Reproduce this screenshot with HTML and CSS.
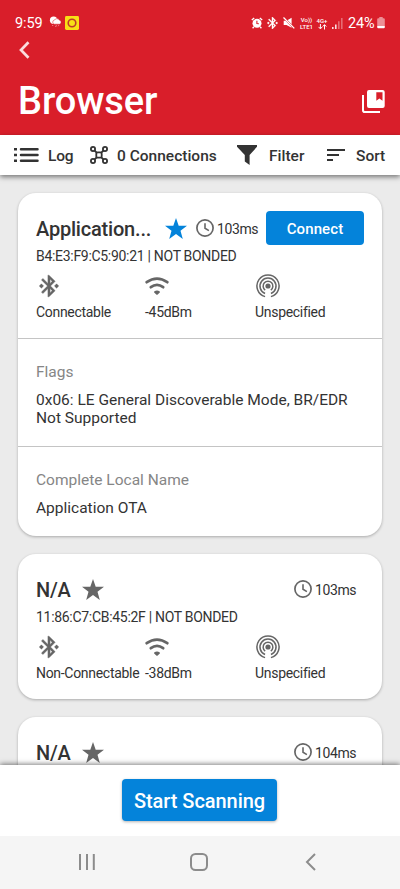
FILE: index.html
```html
<!DOCTYPE html>
<html lang="en">
<head>
<meta charset="utf-8">
<meta name="viewport" content="width=device-width, initial-scale=1">
<title>Browser</title>
<link rel="stylesheet" href="styles.css">
</head>
<body>
<svg class="sprite" width="0" height="0">
  <symbol id="bt" viewBox="0 0 24 24"><path d="M7 12l-2-2-2 2 2 2 2-2zm10.71-4.29L12 2h-1v7.59L6.41 5 5 6.41 10.59 12 5 17.59 6.41 19 11 14.41V22h1l5.71-5.71-4.3-4.29 4.3-4.29zM13 5.83l1.88 1.88L13 9.59V5.83zm1.88 10.46L13 18.17v-3.76l1.88 1.88zM19 10l-2 2 2 2 2-2-2-2z" stroke="currentColor" stroke-width=".35"/></symbol>
  <symbol id="wifi" viewBox="0 0 24 26"><g fill="none" stroke="currentColor" stroke-width="2.7" stroke-linecap="round"><path d="M1.7 9.2Q12 1.9 22.3 9.2"/><path d="M5.8 14.2Q12 9.6 18.2 14.2"/></g><path d="M9.2 18.6a4.4 4.4 0 0 1 5.6 0q.4.5 0 1l-2.1 1.9q-.7.5-1.4 0l-2.1-1.900q-.4-.5 0-1z"/></symbol>
  <symbol id="cast" viewBox="0 0 24 24"><circle cx="12" cy="12" r="2.4"/><g fill="none" stroke="currentColor" stroke-width="1.4"><path d="M9.4 15.7a4.5 4.5 0 1 1 5.2 0"/><path d="M9.3 18.9a7.4 7.4 0 1 1 5.4 0"/><path d="M9.3 21.8a10.2 10.2 0 1 1 5.4 0"/></g></symbol>
  <symbol id="star" viewBox="0 0 22 21"><path d="M11 0l2.7 7.7H22l-6.500 5L17.8 21 11 16.1 4.2 21l2.3-8.3L0 7.7h8.3z"/></symbol>
  <symbol id="clock" viewBox="0 0 18 18"><g fill="none" stroke="currentColor"><circle cx="9" cy="9" r="8.1" stroke-width="1.700"/><path d="M9 4.2V9.3L12.9 11.6" stroke-width="1.600"/></g></symbol>
</svg>

<header class="header">
  <div class="status">
    <span class="time">9:59</span>
    <svg class="weather" viewBox="0 0 13 12"><circle cx="4.6" cy="4.2" r="3.7" fill="#fff"/><path d="M5.2 8.2a2.1 2.1 0 0 1 .3-4.1 2.7 2.7 0 0 1 4.7-.2 2.2 2.2 0 0 1 .3 4.3z" fill="#fff" stroke="#d91e2a" stroke-width=".5"/><path d="M4 9l-.6 1M7.4 9.2L6.6 11M9.8 9.2l-.6 1" stroke="#f6a9ad" stroke-width=".8"/></svg>
    <svg class="app" viewBox="0 0 14 14"><rect width="14" height="14" rx="1.4" fill="#f8df16"/><circle cx="7" cy="7" r="3.8" fill="none" stroke="#c0392a" stroke-width="1.6"/></svg>
    <div class="indicators">
      <svg class="i-alarm" viewBox="0 0 12 12"><circle cx="6" cy="6.3" r="4.500" fill="#fff"/><path d="M.8 3L3.2.9M11.2 3L8.8.9M2.9 9.7l-1.3 1.5M9.1 9.7l1.3 1.5" stroke="#fff" stroke-width="1.3"/><path d="M5.9 3.7v2.900l2 .1" fill="none" stroke="#d91e2a" stroke-width="1.1"/></svg>
      <svg class="i-bt" viewBox="3 2 18 20"><use href="#bt" width="24" height="24"/></svg>
      <svg class="i-mute" viewBox="0 0 12 12"><path d="M.7 3.7h2.800L8.600.7v10L3.500 8H.7z" fill="#fff"/><path d="M.5.3L11.5 11.6" stroke="#d91e2a" stroke-width="2"/><path d="M.5.5L11.3 11.4" stroke="#fff" stroke-width="1.3"/></svg>
      <span class="stack"><span>Vo))</span><span>LTE1</span></span>
      <span class="stack net"><span>4G+</span><svg viewBox="0 0 9 6"><path d="M2.4 0v4.5M.6 2.9l1.8 2 1.8-2M6.5 5.5V1M4.7 2.6l1.8-2 1.8 2" fill="none" stroke="#fff" stroke-width="1"/></svg></span>
      <svg class="i-signal" viewBox="0 0 11 11"><path d="M0 9h1.6v2H0zM3 6.5h1.600V11H3z" fill="#fff" opacity=".85"/><path d="M6 3.3h1.600V11H6zM9 0h1.600v11H9z" fill="#fff" opacity=".35"/></svg>
      <span class="pct">24%</span>
      <svg class="i-batt" viewBox="0 0 8 12"><path d="M2.3 0h3.4v1.2h1q1.1 0 1.1 1.100V9H.2V2.300q0-1.100 1.100-1.100h1z" fill="#fff" opacity=".5"/><path d="M.2 9h7.600v1.300q0 .9-1 .9H1.200q-1 0-1-.9z" fill="#fff"/></svg>
    </div>
  </div>
  <svg class="back" viewBox="0 0 11 18"><path d="M9.5 1.3L2 9l7.500 7.700" fill="none" stroke="#fbdcde" stroke-width="2.7"/></svg>
  <div class="title-row">
    <h1>Browser</h1>
    <svg class="books" viewBox="0 0 23 23"><path d="M1 5v15.2Q1 22 2.800 22H18" fill="none" stroke="#fff" stroke-width="2"/><path fill="#fff" fill-rule="evenodd" d="M7 0h13.600q2.100 0 2.100 2.100V16q0 2-2.100 2H7q-2 0-2-2V2q0-2 2-2zM14.300 2.300v8.500L17.400 8.600l3.100 2.200V2.300z"/></svg>
  </div>
</header>

<nav class="toolbar">
  <svg class="t-log" viewBox="0 0 25 14"><path d="M0 1.300h3M0 7h3M0 12.700h3" stroke="currentColor" stroke-width="2.500"/><path d="M7 1.300h16.500M7 7h16.500M7 12.700h16.500" stroke="currentColor" stroke-width="2.500" stroke-linecap="round"/></svg>
  <span class="l-log">Log</span>
  <svg class="t-conn" viewBox="0 0 18 18"><g fill="none" stroke="currentColor" stroke-width="1.800"><circle cx="3" cy="3" r="2.100"/><circle cx="15" cy="3" r="2.100"/><circle cx="3" cy="15" r="2.100"/><circle cx="15" cy="15" r="2.100"/><rect x="6.300" y="6.300" width="5.400" height="5.400" rx="1.400"/><path d="M4.500 4.500l2.200 2.200M13.500 4.500l-2.200 2.200M4.500 13.500l2.200-2.200M13.500 13.500l-2.200-2.200"/></g></svg>
  <span class="l-conn">0 Connections</span>
  <svg class="t-filter" viewBox="0 0 20 20"><path d="M0 0h20v1.800L12.600 10v10L7.800 16.500V10L0 1.800z"/></svg>
  <span class="l-filter">Filter</span>
  <svg class="t-sort" viewBox="0 0 18 12"><path d="M0 1h18M0 6h12M0 11h6" stroke="currentColor" stroke-width="2"/></svg>
  <span class="l-sort">Sort</span>
</nav>

<main class="list">
  <article class="card">
    <section class="device">
      <div class="top">
        <h2 class="w-app">Application...</h2>
        <svg class="star on"><use href="#star"/></svg>
        <svg class="clock near"><use href="#clock"/></svg>
        <span class="interval">103ms</span>
        <button class="connect">Connect</button>
      </div>
      <p class="addr">B4:E3:F9:C5:90:21 | NOT BONDED</p>
      <div class="facts">
        <div><svg><use href="#bt"/></svg><span>Connectable</span></div>
        <div><svg class="wifi"><use href="#wifi"/></svg><span>-45dBm</span></div>
        <div><svg><use href="#cast"/></svg><span>Unspecified</span></div>
      </div>
    </section>
    <section class="detail">
      <h3>Flags</h3>
      <p>0x06: LE General Discoverable Mode, BR/EDR<br>Not Supported</p>
    </section>
    <section class="detail last">
      <h3>Complete Local Name</h3>
      <p>Application OTA</p>
    </section>
  </article>

  <article class="card">
    <section class="device">
      <div class="top">
        <h2>N/A</h2>
        <svg class="star"><use href="#star"/></svg>
        <svg class="clock far"><use href="#clock"/></svg>
        <span class="interval">103ms</span>
      </div>
      <p class="addr">11:86:C7:CB:45:2F | NOT BONDED</p>
      <div class="facts">
        <div><svg><use href="#bt"/></svg><span>Non-Connectable</span></div>
        <div><svg class="wifi"><use href="#wifi"/></svg><span>-38dBm</span></div>
        <div><svg><use href="#cast"/></svg><span>Unspecified</span></div>
      </div>
    </section>
  </article>

  <article class="card">
    <section class="device">
      <div class="top">
        <h2>N/A</h2>
        <svg class="star"><use href="#star"/></svg>
        <svg class="clock far"><use href="#clock"/></svg>
        <span class="interval">104ms</span>
      </div>
    </section>
  </article>
</main>

<footer class="scan-bar"><button class="scan">Start Scanning</button></footer>
<div class="sysnav">
  <svg viewBox="0 0 18 18"><path d="M2 1v16M9 1v16M15.800 1v16"/></svg>
  <svg viewBox="0 0 18 18"><rect x="1" y="1" width="16" height="16" rx="4.500"/></svg>
  <svg viewBox="0 0 18 18"><path d="M13 1L5 9l8 8"/></svg>
</div>
</body>
</html>
```
FILE: styles.css
```css
* { box-sizing: border-box; margin: 0; padding: 0; }
body {
  width: 400px; height: 889px; overflow: hidden;
  display: flex; flex-direction: column;
  background: #ebebeb; color: #333;
  font-family: Roboto, "Liberation Sans", sans-serif;
}
svg { display: block; flex: none; fill: currentColor; }
span, h1, h2, h3, p { white-space: nowrap; }
.sprite { position: absolute; }

.header { flex: none; height: 135px; background: #d91e2a; color: #fff; }
.status { display: flex; align-items: center; height: 46px; padding: 0 15px; }
.time { width: 34px; font-size: 14.5px; letter-spacing: -.1px; }
.weather { width: 13px; height: 12px; margin-top: -2px; }
.app { width: 14px; height: 14px; margin-left: 3px; }
.indicators { display: flex; align-items: center; margin-left: auto; }
.i-alarm { width: 12px; height: 12px; margin-right: 4px; }
.i-bt { width: 11px; height: 12px; margin-right: 5px; }
.i-mute { width: 12px; height: 12px; margin-right: 4px; }
.stack { display: flex; flex-direction: column; align-items: center; width: 15px; font-size: 6px; line-height: 6.500px; font-weight: 500; }
.stack span { line-height: 7px; }
.net { width: 12px; margin: 0 4px 0 2px; }
.net svg { width: 9px; height: 6px; }
.i-signal { width: 11px; height: 11px; }
.pct { width: 29px; margin-left: 5px; font-size: 14.500px; letter-spacing: -.1px; }
.i-batt { width: 8px; height: 12px; }
.back { width: 11px; height: 18px; margin: -5px 0 0 19px; }
.title-row { display: flex; justify-content: space-between; align-items: center; height: 44px; margin-top: 20px; padding: 0 15px 0 18px; }
h1 { font-size: 38px; font-weight: 500; line-height: 44px; letter-spacing: -.1px; }
.books { width: 23px; height: 23px; }

.toolbar {
  flex: none; display: flex; align-items: center; height: 40px; padding-left: 14px;
  position: relative; z-index: 1; background: #fff;
  box-shadow: 0 2px 5px rgba(0, 0, 0, .5);
  font-size: 15.500px; font-weight: 500;
}
.toolbar span { padding-top: 1px; }
.t-log { width: 25px; height: 14px; }
.l-log { width: 43px; padding-left: 9px; letter-spacing: -.2px; }
.t-conn { width: 18px; height: 18px; margin-left: 8px; }
.l-conn { width: 121px; padding-left: 9px; }
.t-filter { width: 20px; height: 20px; margin-left: 8px; }
.l-filter { width: 70px; padding-left: 12px; }
.t-sort { width: 18px; height: 12px; }
.l-sort { padding-left: 11px; }

.list { flex: 1; min-height: 0; overflow: hidden; display: flex; flex-direction: column; gap: 18px; padding: 18px 18px 0; }
.card { flex: none; border-radius: 18px; background: #fff; box-shadow: 0 1px 3px rgba(0, 0, 0, .28); }
.device { height: 145px; padding: 18px 18px 0; }
.top { display: flex; align-items: center; height: 34px; }
h2 { padding-top: 2px; font-size: 20px; font-weight: 500; line-height: 34px; letter-spacing: -.2px; }
.w-app { width: 118px; }
.star { width: 22px; height: 21px; margin-left: 11px; color: #666; }
.star.on { color: #0483da; }
.clock { width: 18px; height: 18px; color: #666; }
.near { margin-left: 9px; }
.far { margin-left: auto; }
.interval { width: 52px; padding: 2px 0 0 3px; font-size: 14px; letter-spacing: -.4px; }
button { border: 0; background: #0483da; color: #fff; font-family: inherit; font-weight: 500; border-radius: 4px; white-space: nowrap; }
.connect { width: 98px; height: 34px; padding-top: 1px; flex: none; font-size: 15px; letter-spacing: .1px; }
.addr { margin-top: 3px; font-size: 14px; line-height: 16px; letter-spacing: -.3px; }
.facts { display: grid; grid-template-columns: 109px 110px 1fr; margin-top: 9px; }
.facts svg { width: 26px; height: 26px; color: #666; }
.facts .wifi { width: 24px; }
.facts span { display: block; margin-top: 5px; font-size: 14px; line-height: 16px; letter-spacing: -.3px; }
.detail { height: 108px; padding: 24px 18px 0; border-top: 1px solid #c4c4c4; }
.detail.last { height: 90px; }
h3 { font-size: 15.500px; font-weight: 400; line-height: 18px; color: #868686; }
.detail p { margin-top: 10px; font-size: 15.500px; line-height: 18px; }

.scan-bar { flex: none; display: flex; justify-content: center; height: 71px; padding: 14px 1px 0 0; position: relative; z-index: 1; background: #fff; box-shadow: 0 -1px 5px rgba(0, 0, 0, .5); }
.scan { width: 155px; height: 42px; padding-top: 2px; font-size: 20px; letter-spacing: -.05px; box-shadow: 0 1px 3px rgba(0, 0, 0, .3); }
.sysnav { flex: none; display: flex; align-items: center; justify-content: center; gap: 94px; height: 53px; padding: 0 3px 2px 0; background: #f5f5f5; position: relative; z-index: 2; }
.sysnav svg { width: 18px; height: 18px; fill: none; stroke: #8c8c8c; stroke-width: 2; }
```
